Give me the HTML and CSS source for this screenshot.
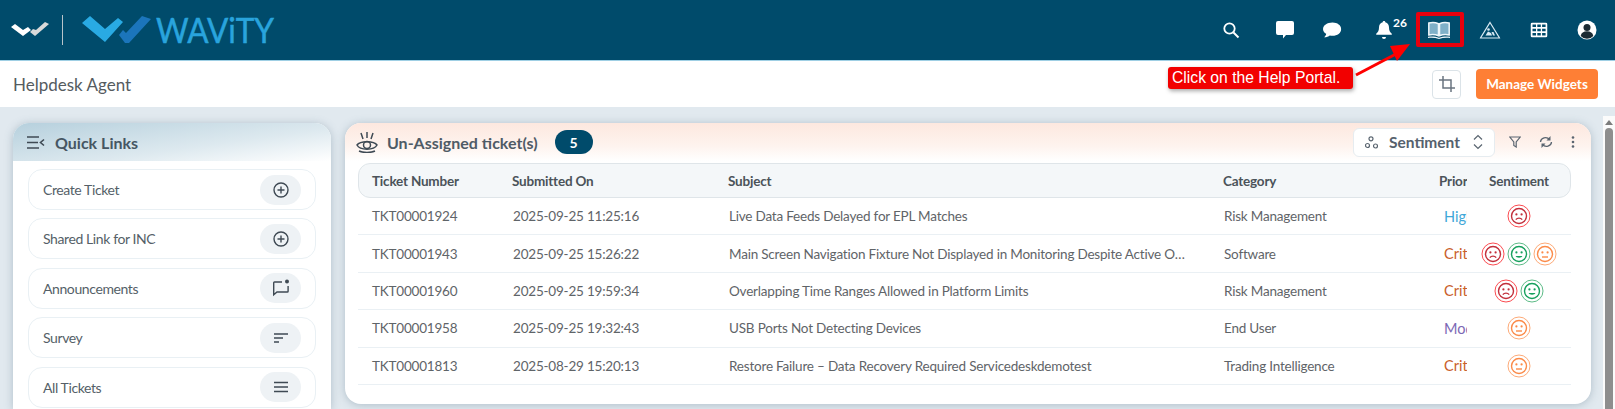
FILE: index.html
```html
<!DOCTYPE html>
<html>
<head>
<meta charset="utf-8" />
<title>Helpdesk Agent</title>
<link rel="stylesheet" href="styles.css">
</head>
<body>
<svg class="defs" width="0" height="0">
	<symbol id="sad" viewBox="0 0 24 24">
		<circle cx="12" cy="12" r="11" fill="none" stroke="#fb4b50" stroke-width="1" />
		<circle cx="12" cy="12" r="7.5" fill="none" stroke="#c22f3b" stroke-width="1.4" />
		<circle cx="9.4" cy="10.4" r="1.1" fill="#c22f3b" />
		<circle cx="14.6" cy="10.4" r="1.1" fill="#c22f3b" />
		<path d="M8.8 15.6c1.6-2 4.8-2 6.4 0" fill="none" stroke="#c22f3b" stroke-width="1.4" />
	</symbol>
	<symbol id="happy" viewBox="0 0 24 24">
		<circle cx="12" cy="12" r="11" fill="none" stroke="#5dbb87" stroke-width="1" />
		<circle cx="12" cy="12" r="7.5" fill="none" stroke="#17a05d" stroke-width="1.4" />
		<circle cx="9.4" cy="10.4" r="1.1" fill="#17a05d" />
		<circle cx="14.6" cy="10.4" r="1.1" fill="#17a05d" />
		<path d="M8.6 14h6.8c-.6 2.2-6.2 2.2-6.8 0z" fill="#17a05d" />
	</symbol>
	<symbol id="neutral" viewBox="0 0 24 24">
		<circle cx="12" cy="12" r="11" fill="none" stroke="#fdaa78" stroke-width="1" />
		<circle cx="12" cy="12" r="7.5" fill="none" stroke="#fb8a48" stroke-width="1.4" />
		<circle cx="9.4" cy="10.4" r="1.1" fill="#fb8a48" />
		<circle cx="14.6" cy="10.4" r="1.1" fill="#fb8a48" />
		<path d="M9 15h6" fill="none" stroke="#fb8a48" stroke-width="1.4" />
	</symbol>
	<symbol id="plus" viewBox="0 0 18 18">
		<circle cx="9" cy="9" r="7" fill="none" stroke="#3f4a54" stroke-width="1.4" />
		<path d="M9 5.5v7M5.5 9h7" fill="none" stroke="#3f4a54" stroke-width="1.4" />
	</symbol>
</svg>

<div class="topbar">
	<svg class="logo-small" width="38" height="16" viewBox="0 0 38 16">
		<path d="M0 6l4-3 8 6 5-3 3 3-8 6z" fill="#fff" />
		<path d="M19 11l5 4 14-12-4-2-9 8-3-1z" fill="#d9d9d9" />
	</svg>
	<span class="logo-sep"></span>
	<svg class="logo-mark" width="69" height="28" viewBox="0 0 69 28">
		<path d="M0 8l8-7 15 13 13-11 5 4-18 20z" fill="#29aae3" />
		<path d="M37 20l4-5 3 3 16-17 9 3-22 24h-4z" fill="#1b75bb" />
	</svg>
	<span class="logo-name">WAViTY</span>
	<div class="top-icons">
		<svg class="ti ti-search" width="18" height="18" viewBox="0 0 18 18"><circle cx="7.5" cy="7.5" r="5.2" fill="none" stroke="#fff" stroke-width="1.8" /><path d="M11.5 11.5l5 5" stroke="#fff" stroke-width="2" /></svg>
		<svg class="ti ti-chat" width="18" height="18" viewBox="0 0 18 18"><path d="M2 0h14a2 2 0 0 1 2 2v10a2 2 0 0 1-2 2h-6l-3 3.500v-3.500h-5a2 2 0 0 1-2-2v-10a2 2 0 0 1 2-2z" fill="#fff" /></svg>
		<svg class="ti ti-comment" width="19" height="17" viewBox="0 0 18 16"><path d="M9.500 1c4.600 0 8.200 2.700 8.200 6.200s-3.600 6.200-8.200 6.200c-.9 0-1.800-.1-2.600-.3-1.200 1-2.800 1.700-5.400 1.800 1.200-1 1.900-2.200 2-3.300-1.900-1.100-3-2.700-3-4.400 0-3.500 4-6.200 9-6.200z" fill="#fff" /></svg>
		<span class="bell">
			<svg width="16" height="20" viewBox="0 0 16 20"><path d="M8 1c.8 0 1.300.5 1.300 1.300 2.600.6 3.700 2.800 3.700 5.200 0 3 1 4.700 2.800 6.200v1.100h-15.600v-1.100c1.800-1.500 2.800-3.200 2.800-6.200 0-2.400 1.100-4.600 3.700-5.200 0-.8.500-1.300 1.300-1.300z" fill="#fff" /><path d="M6 17h4a2 2 0 0 1-4 0z" fill="#fff" /></svg>
			<b class="bell-count">26</b>
		</span>
		<svg class="ti ti-book" width="22" height="18" viewBox="0 0 22 18"><path d="M.8 2c3-.9 6.600-.8 9.700.7v12c-3-1.300-6.600-1.400-9.700-.8zM21.200 2c-3-.9-6.600-.8-9.700.7v12c3-1.300 6.600-1.400 9.700-.8z" fill="#7fb0c8" stroke="#eef6fa" stroke-width="1.500" /><path d="M0 15.800c3.500-.6 7.500-.5 11 1 3.500-1.500 7.500-1.600 11-1v1.300c-3.500-.5-7.500-.3-11 .9-3.500-1.200-7.500-1.400-11-.9z" fill="#eef6fa" /></svg>
		<svg class="ti ti-warn" width="21" height="18" viewBox="0 0 21 18"><path d="M10.500 1.500l9.500 15.500h-19z" fill="none" stroke="#d8e9f2" stroke-width="1.200" /><circle cx="9" cy="8.500" r="1.300" fill="#d8e9f2" /><path d="M6 14.500l2.500-4 3 1.500 1 2.500zM12 11l2 0 1.500 3.500h-2z" fill="#d8e9f2" /></svg>
		<svg class="ti ti-grid" width="17" height="15" viewBox="0 0 17 15"><path d="M2 0h13a2 2 0 0 1 2 2v11a2 2 0 0 1-2 2h-13a2 2 0 0 1-2-2v-11a2 2 0 0 1 2-2zM2 2v2.500h3.500v-2.500zM6.800 2v2.500h3.500v-2.500zM11.600 2v2.500h3.500v-2.500zM2 6.200v2.600h3.500v-2.600zM6.800 6.200v2.600h3.500v-2.600zM11.600 6.200v2.600h3.500v-2.600zM2 10.500v2.500h3.500v-2.500zM6.800 10.500v2.500h3.500v-2.500zM11.600 10.500v2.500h3.500v-2.500z" fill="#fff" fill-rule="evenodd" /></svg>
		<svg class="ti ti-user" width="20" height="20" viewBox="0 0 20 20"><circle cx="10" cy="10" r="9.500" fill="#fff" /><circle cx="10" cy="7.500" r="3.500" fill="#1c2b33" /><path d="M3.700 16c.5-3.200 3-4.700 6.300-4.700s5.800 1.500 6.300 4.700a8.500 8.500 0 0 1-12.600 0z" fill="#1c2b33" /></svg>
	</div>
</div>

<div class="subbar">
	<div class="page-title">Helpdesk Agent</div>
	<div class="crop-btn">
		<svg width="16" height="16" viewBox="0 0 16 16"><path d="M4 0v12h12M0 4h12v12" fill="none" stroke="#6a7480" stroke-width="1.500" /></svg>
	</div>
	<div class="manage-btn">Manage Widgets</div>
</div>

<div class="content">
	<div class="card quick">
		<div class="quick-head">
			<svg width="18" height="13" viewBox="0 0 18 13"><path d="M0 1h12M0 6.500h11M0 12h12" stroke="#3f4a54" stroke-width="1.600" /><path d="M17 3.500l-3.500 3 3.500 3" fill="none" stroke="#3f4a54" stroke-width="1.600" /></svg>
			<span>Quick Links</span>
		</div>
		<div class="quick-list">
			<div class="quick-item"><span>Create Ticket</span><span class="pill"><svg width="18" height="18"><use href="#plus" /></svg></span></div>
			<div class="quick-item"><span>Shared Link for INC</span><span class="pill"><svg width="18" height="18"><use href="#plus" /></svg></span></div>
			<div class="quick-item"><span>Announcements</span><span class="pill"><svg width="18" height="18" viewBox="0 0 18 18"><path d="M10 3h-7.500a.8.800 0 0 0-.8.800v12l3.300-2.800h10.300a.8.800 0 0 0 .8-.8v-5.200" fill="none" stroke="#3f4a54" stroke-width="1.400" /><circle cx="15" cy="2.500" r="2" fill="#3f4a54" /></svg></span></div>
			<div class="quick-item"><span>Survey</span><span class="pill"><svg width="16" height="12" viewBox="0 0 16 12"><path d="M1 2h14M1 6h9M1 10h5" stroke="#3f4a54" stroke-width="1.400" /></svg></span></div>
			<div class="quick-item"><span>All Tickets</span><span class="pill"><svg width="16" height="12" viewBox="0 0 16 12"><path d="M1 1.500h14M1 6h14M1 10.500h14" stroke="#3f4a54" stroke-width="1.500" /></svg></span></div>
		</div>
	</div>

	<div class="card tickets">
		<div class="tickets-head">
			<svg width="22" height="21" viewBox="0 0 22 21"><path d="M1 13c3-4.500 17-4.500 20 0-3 5.500-17 5.500-20 0z" fill="none" stroke="#3f4a54" stroke-width="1.500" /><circle cx="11" cy="13" r="3.500" fill="none" stroke="#3f4a54" stroke-width="1.500" /><path d="M5 1l2 6M11 0v6M17 1l-2 6M3 19c4 2 12 2 16 0" fill="none" stroke="#3f4a54" stroke-width="1.500" /></svg>
			<span class="tickets-title">Un-Assigned ticket(s)</span>
			<span class="count">5</span>
			<div class="sent-select">
				<svg width="13" height="13" viewBox="0 0 13 13"><circle cx="6" cy="2.800" r="2" fill="none" stroke="#5a6570" stroke-width="1.200" /><circle cx="2.500" cy="9.500" r="2" fill="none" stroke="#5a6570" stroke-width="1.200" /><circle cx="10.500" cy="10" r="2" fill="none" stroke="#5a6570" stroke-width="1.200" /></svg>
				<span class="sent-label">Sentiment</span>
				<svg width="10" height="16" viewBox="0 0 10 16"><path d="M1 5.500l4-4 4 4M1 10.500l4 4 4-4" fill="none" stroke="#5a6570" stroke-width="1.200" /></svg>
			</div>
			<div class="tools">
				<svg width="12" height="12" viewBox="0 0 12 12"><path d="M.8 1h10.400l-4 5v5l-2.400-1.500v-3.500z" fill="none" stroke="#5a6570" stroke-width="1.200" /></svg>
				<svg width="14" height="12" viewBox="0 0 14 12"><path d="M1.500 6a5 4.500 0 0 1 9-2.500M12.500 6a5 4.500 0 0 1-9 2.500" fill="none" stroke="#5a6570" stroke-width="1.300" /><path d="M11.500 0v4.500h-4zM2.500 12v-4.500h4z" fill="#5a6570" /></svg>
				<svg width="4" height="12" viewBox="0 0 4 12"><circle cx="2" cy="1.500" r="1.300" fill="#5a6570" /><circle cx="2" cy="6" r="1.300" fill="#5a6570" /><circle cx="2" cy="10.500" r="1.300" fill="#5a6570" /></svg>
			</div>
		</div>

		<div class="grid-wrap">
			<div class="row row-head">
				<div>Ticket Number</div>
				<div>Submitted On</div>
				<div>Subject</div>
				<div>Category</div>
				<div class="prio">Priority</div>
				<div class="sent">Sentiment</div>
			</div>
			<div class="row">
				<div>TKT00001924</div>
				<div class="c">2025-09-25 11:25:16</div>
				<div class="c subj">Live Data Feeds Delayed for EPL Matches</div>
				<div class="c">Risk Management</div>
				<div class="prio p-high">High</div>
				<div class="sent"><svg class="face"><use href="#sad" /></svg></div>
			</div>
			<div class="row">
				<div>TKT00001943</div>
				<div class="c">2025-09-25 15:26:22</div>
				<div class="c subj">Main Screen Navigation Fixture Not Displayed in Monitoring Despite Active Odds Feed</div>
				<div class="c">Software</div>
				<div class="prio p-crit">Critical</div>
				<div class="sent"><svg class="face"><use href="#sad" /></svg><svg class="face"><use href="#happy" /></svg><svg class="face"><use href="#neutral" /></svg></div>
			</div>
			<div class="row">
				<div>TKT00001960</div>
				<div class="c">2025-09-25 19:59:34</div>
				<div class="c subj">Overlapping Time Ranges Allowed in Platform Limits</div>
				<div class="c">Risk Management</div>
				<div class="prio p-crit">Critical</div>
				<div class="sent"><svg class="face"><use href="#sad" /></svg><svg class="face"><use href="#happy" /></svg></div>
			</div>
			<div class="row">
				<div>TKT00001958</div>
				<div class="c">2025-09-25 19:32:43</div>
				<div class="c subj">USB Ports Not Detecting Devices</div>
				<div class="c">End User</div>
				<div class="prio p-mod">Moderate</div>
				<div class="sent"><svg class="face"><use href="#neutral" /></svg></div>
			</div>
			<div class="row">
				<div>TKT00001813</div>
				<div class="c">2025-08-29 15:20:13</div>
				<div class="c subj">Restore Failure – Data Recovery Required Servicedeskdemotest</div>
				<div class="c">Trading Intelligence</div>
				<div class="prio p-crit">Critical</div>
				<div class="sent"><svg class="face"><use href="#neutral" /></svg></div>
			</div>
		</div>
	</div>

	<div class="scrollbar">
		<span class="sb-up"></span>
		<span class="sb-thumb"></span>
	</div>
</div>

<!-- tutorial annotation drawn over the page -->
<div class="hl-box"></div>
<svg class="hl-arrow" width="60" height="34" viewBox="0 0 60 34">
	<path d="M1 32l40-21" stroke="#f00" stroke-width="3" />
	<path d="M55 1l-20 2 7 15z" fill="#f00" />
</svg>
<div class="hl-note">Click on the Help Portal.</div>
</body>
</html>
```

FILE: styles.css
```css
*{margin:0;padding:0;box-sizing:border-box;}
html,body{height:100%;overflow:hidden;}
body{position:relative;background:#e1e9ef;font-family:"Lato","Liberation Sans",sans-serif;color:#5f6468;display:flex;flex-direction:column;}
.defs{position:absolute;}

.topbar{height:61px;flex:none;background:#004b6b;border-bottom:1px solid #9fcfe4;display:flex;align-items:center;padding-left:11px;}
.logo-small{margin-top:-2px;}
.logo-sep{width:1px;height:30px;background:#b9c4ca;margin:0 19px 0 13px;}
.logo-mark{margin-top:-2px;}
.logo-name{font-family:"Lato",sans-serif;font-size:35px;line-height:36px;color:#29a4dd;margin:-3px 0 0 5px;transform:scaleX(.9);transform-origin:left center;-webkit-text-stroke:.5px #29a4dd;}
.top-icons{margin-left:auto;display:flex;align-items:center;height:100%;position:relative;width:394px;}
.ti{position:absolute;top:50%;transform:translate(-50%,-50%);}
.ti-search{left:10px;}
.ti-chat{left:64px;}
.ti-comment{left:111px;}
.bell{position:absolute;left:155px;top:20px;width:16px;height:20px;}
.bell-count{position:absolute;left:17px;top:-4px;color:#fff;font-size:12px;line-height:14px;font-weight:700;}
.ti-book{left:218px;}
.ti-warn{left:269px;}
.ti-grid{left:318px;}
.ti-user{left:366px;}

.subbar{height:46px;flex:none;background:#fff;display:flex;align-items:center;padding:0 17px 0 13px;}
.page-title{font-size:17px;color:#555b60;margin-right:auto;}
.crop-btn{width:29px;height:29px;border:1px solid #dbe3e8;border-radius:4px;display:flex;align-items:center;justify-content:center;margin-right:15px;}
.manage-btn{width:122px;height:30px;border-radius:4px;background:#fe7f35;color:#fff;font-size:13.500px;font-weight:700;display:flex;align-items:center;justify-content:center;}

.content{flex:1;min-height:0;display:flex;align-items:flex-start;padding:16px 0 0 13px;gap:14px;}
.card{background:#fff;border-radius:16px;box-shadow:0 1px 8px rgba(80,110,130,.35);overflow:hidden;}
.quick{width:318px;height:286px;flex:none;border-radius:16px 16px 0 0;}
.quick-head{height:38px;display:flex;align-items:center;gap:10px;padding-left:14px;font-size:16px;font-weight:700;color:#465663;background:linear-gradient(172deg,#b6d0dd 0%,#dde9ef 60%,#fff 100%);}
.quick-list{display:flex;flex-direction:column;gap:8.4px;padding:8px 15px 0;}
.quick-item{height:41px;flex:none;border:1.5px solid #e9f0f4;border-radius:14px;display:flex;align-items:center;justify-content:space-between;padding:0 14px;font-size:14px;letter-spacing:-.4px;color:#555f68;}
.pill{width:41px;height:30px;border-radius:15px;background:#eef2f5;display:flex;align-items:center;justify-content:center;}

.tickets{width:1246px;height:281px;flex:none;}
.tickets-head{height:38px;display:flex;align-items:center;padding-left:11px;background:linear-gradient(180deg,#fde8df 0%,#fef3ee 60%,#fff 100%);}
.tickets-title{font-size:16px;font-weight:700;color:#4f5b66;margin-left:9px;}
.count{width:38px;height:24px;border-radius:12px;background:#004b6b;color:#fff;font-size:14px;font-weight:700;display:flex;align-items:center;justify-content:center;margin-left:17px;}
.sent-select{width:142px;height:29px;margin-left:auto;background:#fff;border:1px solid #e6ecf0;border-radius:6px;display:flex;align-items:center;padding:0 11px 0 11px;}
.sent-label{font-size:15.500px;font-weight:700;color:#56616d;margin:0 auto 0 11px;}
.tools{width:96px;display:flex;align-items:center;justify-content:space-between;padding:0 16px 0 14px;}

.grid-wrap{margin:2px 20px 0 13px;font-size:13.500px;letter-spacing:-.2px;}
.row{display:grid;grid-template-columns:140px 216px 495px 216px 28px 104px;align-items:center;height:37.400px;padding-left:14px;border-bottom:1.500px solid #eaf0f4;}
.row-head{height:35px;background:#f4f7f9;border:1px solid #dfe5e9;border-radius:12px;font-weight:700;color:#4b5359;padding-left:13px;}
.row>div{white-space:nowrap;}
.row .c{padding-left:1px;}
.row .subj{overflow:hidden;text-overflow:ellipsis;padding-right:37px;}
.row .prio{overflow:hidden;}
.row:not(.row-head) .prio{padding-left:5px;font-size:14.500px;letter-spacing:0;}
.sent{display:flex;justify-content:center;align-items:center;gap:2px;}
.face{width:24px;height:24px;}
.p-high{color:#3fa7d8;}
.p-crit{color:#c9602c;}
.p-mod{color:#7c68b5;}

.scrollbar{flex:none;width:12px;height:293px;margin:-7px 0 0 -2px;background:#fbfbfb;display:flex;flex-direction:column;align-items:center;}
.sb-up{width:0;height:0;border-left:4px solid transparent;border-right:4px solid transparent;border-bottom:5px solid #7c7c7c;margin-top:4px;}
.sb-thumb{width:8px;flex:1;margin-top:3px;background:#8e8e8e;border-radius:4px 4px 0 0;}

.hl-box{position:absolute;left:1416px;top:12px;width:48px;height:35px;border:4px solid #e8000d;border-radius:2px;}
.hl-arrow{position:absolute;left:1355px;top:43px;}
.hl-note{position:absolute;left:1168px;top:67px;width:185px;height:22px;background:#f20000;border-radius:3px;box-shadow:1px 2px 4px rgba(0,0,0,.35);color:#fff;font-family:"Liberation Sans",sans-serif;font-size:15.700px;line-height:21px;padding-left:4px;white-space:nowrap;}
```
